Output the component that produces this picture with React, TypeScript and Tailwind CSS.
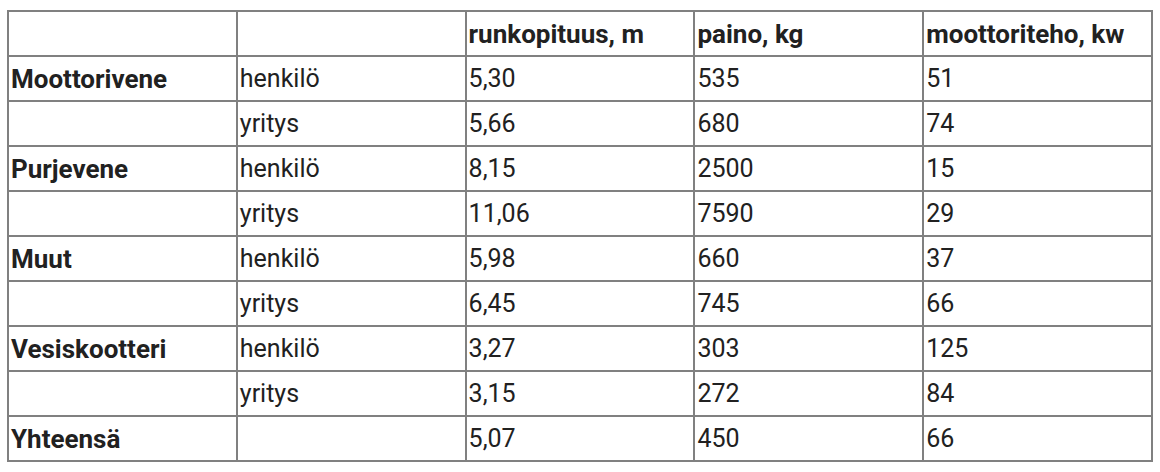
import React from 'react'

type Row = { group: string; kind: string; length: string; weight: string; power: string }

const rows: Row[] = [
  { group: "Moottorivene", kind: "henkilö", length: "5,30", weight: "535", power: "51" },
  { group: "", kind: "yritys", length: "5,66", weight: "680", power: "74" },
  { group: "Purjevene", kind: "henkilö", length: "8,15", weight: "2500", power: "15" },
  { group: "", kind: "yritys", length: "11,06", weight: "7590", power: "29" },
  { group: "Muut", kind: "henkilö", length: "5,98", weight: "660", power: "37" },
  { group: "", kind: "yritys", length: "6,45", weight: "745", power: "66" },
  { group: "Vesiskootteri", kind: "henkilö", length: "3,27", weight: "303", power: "125" },
  { group: "", kind: "yritys", length: "3,15", weight: "272", power: "84" },
  { group: "Yhteensä", kind: "", length: "5,07", weight: "450", power: "66" },
]

const cell = "border-2 border-[#808080] h-[45px] pl-[2px] pr-1 py-0 text-left align-middle"
const bold = " font-bold text-[26px]"

export default function App() {
  return (
    <div className="bg-white w-[1160px] h-[472px] pt-[10px] px-[7px] font-['Roboto',sans-serif] text-[25px] leading-[28px] text-[#212121]">
      <table className="w-full border-collapse table-fixed">
        <thead>
          <tr>
            <th className={cell + bold}></th>
            <th className={cell + bold}></th>
            <th className={cell + bold}>runkopituus, m</th>
            <th className={cell + bold}>paino, kg</th>
            <th className={cell + bold}>moottoriteho, kw</th>
          </tr>
        </thead>
        <tbody>
          {rows.map((r, i) => (
            <tr key={i}>
              <td className={cell + bold}>{r.group}</td>
              <td className={cell}>{r.kind}</td>
              <td className={cell}>{r.length}</td>
              <td className={cell}>{r.weight}</td>
              <td className={cell}>{r.power}</td>
            </tr>
          ))}
        </tbody>
      </table>
    </div>
  )
}
